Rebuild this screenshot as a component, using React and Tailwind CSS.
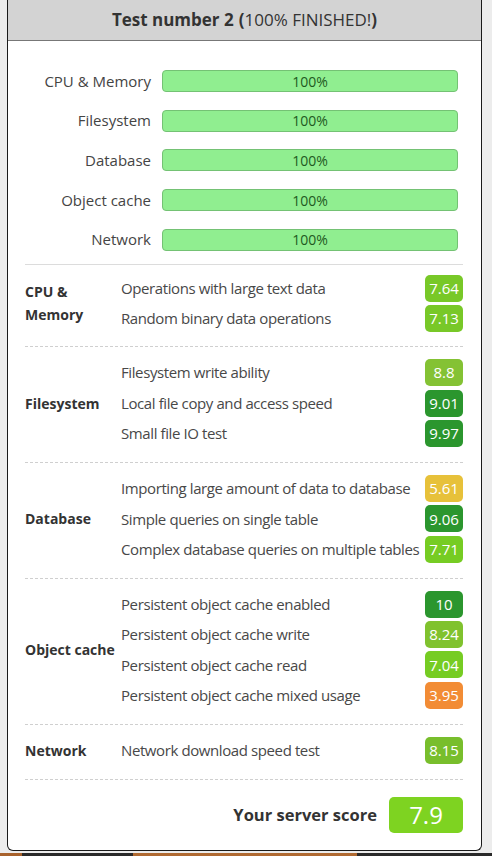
const PROGRESS = ['CPU & Memory', 'Filesystem', 'Database', 'Object cache', 'Network'];

const SECTIONS = [
  {
    name: ['CPU &', 'Memory'],
    tests: [
      { label: 'Operations with large text data', score: '7.64', color: 'bg-[#78c828]' },
      { label: 'Random binary data operations', score: '7.13', color: 'bg-[#78c828]' },
    ],
  },
  {
    name: ['Filesystem'],
    tests: [
      { label: 'Filesystem write ability', score: '8.8', color: 'bg-[#84c234]' },
      { label: 'Local file copy and access speed', score: '9.01', color: 'bg-[#2b962e]' },
      { label: 'Small file IO test', score: '9.97', color: 'bg-[#2b962e]' },
    ],
  },
  {
    name: ['Database'],
    tests: [
      { label: 'Importing large amount of data to database', score: '5.61', color: 'bg-[#e7c13a]' },
      { label: 'Simple queries on single table', score: '9.06', color: 'bg-[#2b962e]' },
      { label: 'Complex database queries on multiple tables', score: '7.71', color: 'bg-[#76cc23]' },
    ],
  },
  {
    name: ['Object cache'],
    tests: [
      { label: 'Persistent object cache enabled', score: '10', color: 'bg-[#2b962e]' },
      { label: 'Persistent object cache write', score: '8.24', color: 'bg-[#80c22e]' },
      { label: 'Persistent object cache read', score: '7.04', color: 'bg-[#76cc23]' },
      { label: 'Persistent object cache mixed usage', score: '3.95', color: 'bg-[#f28c35]' },
    ],
  },
  {
    name: ['Network'],
    tests: [
      { label: 'Network download speed test', score: '8.15', color: 'bg-[#78be2c]' },
    ],
  },
];

export default function App() {
  return (
    <div className="w-[492px] h-[856px] bg-[#ececec] flex flex-col overflow-hidden"
      style={{ fontFamily: '"Open Sans", "Noto Sans", sans-serif' }}>
      <div className="ml-[7px] mr-[10px] bg-white border border-t-0 border-[#1a1a1a] rounded-b-[6px] flex flex-col">
        {/* Header */}
        <div className="h-[41px] bg-[#d3d3d3] border-b border-[#777] flex items-center justify-center text-[17px] text-[#333]">
          <span className="font-bold">Test number 2</span>
          <span className="font-bold ml-[5px]">(</span>
          <span>100% FINISHED!</span>
          <span className="font-bold">)</span>
        </div>

        <div className="pl-[17px] pr-[18px]">
          {/* Progress bars */}
          <div className="pt-[29px] pb-[13px] flex flex-col gap-[17.7px] border-b border-[#dcdcdc]">
            {PROGRESS.map(p => (
              <div key={p} className="flex items-center gap-[11px] pr-[5px]">
                <div className="w-[126px] shrink-0 text-right text-[15px] text-[#444] leading-none">{p}</div>
                <div className="flex-1 h-[22px] rounded-[4px] bg-[#90ee90] border border-[#74c274] flex items-center justify-center text-[14px] text-[#1f5a1f]">
                  100%
                </div>
              </div>
            ))}
          </div>

          {/* Sections */}
          {SECTIONS.map((s, i) => (
            <div key={s.name.join(' ')}
              className={`flex items-center border-b border-dashed border-[#cfcfcf] ${i === 0 ? 'pt-[10px] pb-[14px]' : 'pt-[12px] pb-[15px]'}`}>
              <div className="w-[96px] shrink-0 font-bold text-[14px] text-[#333] leading-[23px] whitespace-nowrap">
                {s.name.map(n => <div key={n}>{n}</div>)}
              </div>
              <div className="flex-1 min-w-0 flex flex-col gap-[3.4px]">
                {s.tests.map(t => (
                  <div key={t.label} className="h-[27px] flex items-center">
                    <span className="flex-1 min-w-0 text-[15px] text-[#484848] whitespace-nowrap tracking-[-0.4px]">{t.label}</span>
                    <span className={`w-[38px] h-[27px] shrink-0 rounded-[5px] flex items-center justify-center text-[15px] text-white ${t.color}`}>
                      {t.score}
                    </span>
                  </div>
                ))}
              </div>
            </div>
          ))}

          {/* Final score */}
          <div className="pt-[17px] pb-[17px] flex items-center justify-end gap-[12px]">
            <span className="font-bold text-[16.5px] text-[#333]">Your server score</span>
            <span className="w-[74px] h-[36px] rounded-[5px] bg-[#7ed321] text-white text-[24px] flex items-center justify-center">
              7.9
            </span>
          </div>
        </div>
      </div>

      <div className="flex-1" />
      <div className="h-[3px] flex">
        <div className="w-[22px] bg-[#a8622c]" />
        <div className="w-[111px] bg-[#2a2a2a]" />
        <div className="w-[224px] bg-[#b06a32]" />
        <div className="flex-1 bg-[#2a2a2a]" />
      </div>
    </div>
  );
}
